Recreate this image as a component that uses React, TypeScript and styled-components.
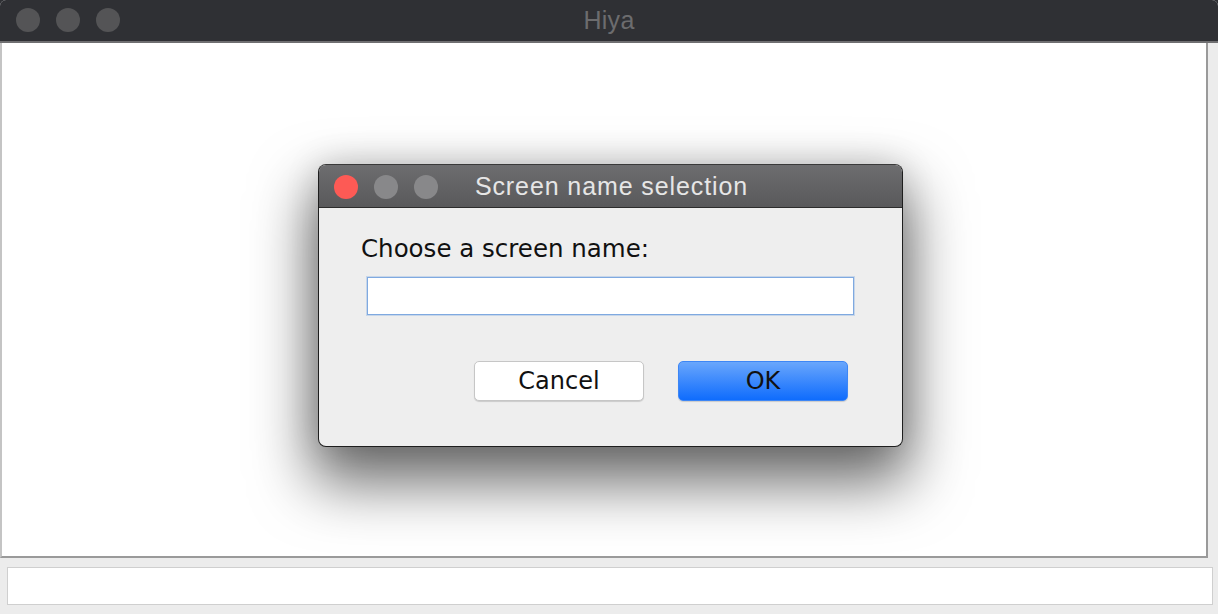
import styled, { createGlobalStyle } from "styled-components";

const GlobalStyle = createGlobalStyle`
    html, body {
        margin: 0;
        padding: 0;
        background: #2f3034;
        overflow: hidden;
    }
    #root {
        width: 1218px;
        height: 614px;
    }
`;

const Window = styled.div`
    position: relative;
    width: 1218px;
    height: 614px;
    display: flex;
    flex-direction: column;
    background: #ececec;
    border-radius: 6px 6px 0 0;
    overflow: hidden;
`;

const TitleBar = styled.div`
    position: relative;
    height: 41px;
    flex-shrink: 0;
    background: #2f3034;
    border-bottom: 2px solid #6f6f71;
    display: flex;
    align-items: center;
    justify-content: center;
`;

const Lights = styled.div`
    position: absolute;
    left: 16px;
    top: 8px;
    display: flex;
    gap: 16px;
`;

const Light = styled.span<{ $color: string }>`
    width: 24px;
    height: 24px;
    border-radius: 50%;
    background: ${(p) => p.$color};
`;

const WindowTitle = styled.div`
    font-family: "Liberation Sans", Arial, sans-serif;
    font-size: 25px;
    letter-spacing: 0.3px;
    color: #6c6c6e;
`;

const Panel = styled.div`
    position: relative;
    height: 515px;
    width: 1208px;
    box-sizing: border-box;
    background: #ffffff;
    border-left: 2px solid #c4c4c4;
    border-right: 2px solid #9a9a9a;
    border-bottom: 2px solid #9a9a9a;
`;

const Footer = styled.div`
    flex: 1;
    padding: 9px 5px 0 7px;
`;

const FooterField = styled.div`
    height: 38px;
    box-sizing: border-box;
    background: #ffffff;
    border: 1px solid #cfcfcf;
`;

const Dialog = styled.div`
    position: absolute;
    left: 316px;
    top: 121px;
    width: 585px;
    height: 283px;
    box-sizing: border-box;
    background: #eeeeee;
    border: 1px solid #1e1e1e;
    border-top-color: #3a3a3a;
    border-radius: 8px;
    overflow: hidden;
    box-shadow: 0 30px 60px 6px rgba(0, 0, 0, 0.58),
        0 0 34px rgba(0, 0, 0, 0.14);
    display: flex;
    flex-direction: column;
`;

const DialogBar = styled.div`
    position: relative;
    height: 42px;
    flex-shrink: 0;
    background: linear-gradient(#6d6d6f, #59595b);
    border-bottom: 1px solid #2c2c2c;
    display: flex;
    align-items: center;
    justify-content: center;
`;

const DialogLights = styled.div`
    position: absolute;
    left: 15px;
    top: 10px;
    display: flex;
    gap: 16px;
`;

const DialogTitle = styled.div`
    font-family: "Liberation Sans", Arial, sans-serif;
    font-size: 25px;
    letter-spacing: 0.9px;
    color: #e6e6e6;
    margin-left: 2px;
`;

const DialogBody = styled.div`
    padding: 27px 48px 0 42px;
    display: flex;
    flex-direction: column;
`;

const Label = styled.div`
    font-family: "DejaVu Sans", "Lucida Grande", sans-serif;
    font-size: 24.5px;
    color: #111111;
    line-height: 28px;
`;

const TextField = styled.div`
    margin: 14px 0 0 6px;
    height: 38px;
    box-sizing: border-box;
    background: #ffffff;
    border: 1px solid #7fa9e0;
    box-shadow: 0 0 0 1px rgba(127, 169, 224, 0.35);
`;

const Buttons = styled.div`
    display: flex;
    justify-content: flex-end;
    gap: 34px;
    margin-top: 46px;
    margin-right: 6px;
`;

const Button = styled.div<{ $primary?: boolean }>`
    width: 170px;
    height: 40px;
    box-sizing: border-box;
    border-radius: 5px;
    display: flex;
    align-items: center;
    justify-content: center;
    font-family: "DejaVu Sans", "Lucida Grande", sans-serif;
    font-size: 24px;
    color: #111111;
    background: ${(p) =>
        p.$primary ? "linear-gradient(#69a6fc, #0f6cfd)" : "#ffffff"};
    border: 1px solid ${(p) => (p.$primary ? "#3d86f5" : "#c6c6c6")};
    box-shadow: 0 1px 1px rgba(0, 0, 0, 0.15);
`;

function App() {
    return (
        <>
            <GlobalStyle />
            <Window>
                <TitleBar>
                    <Lights>
                        <Light $color="#545456" />
                        <Light $color="#545456" />
                        <Light $color="#545456" />
                    </Lights>
                    <WindowTitle>Hiya</WindowTitle>
                </TitleBar>

                <Panel>
                    <Dialog>
                        <DialogBar>
                            <DialogLights>
                                <Light $color="#fd5a55" />
                                <Light $color="#88888a" />
                                <Light $color="#88888a" />
                            </DialogLights>
                            <DialogTitle>Screen name selection</DialogTitle>
                        </DialogBar>
                        <DialogBody>
                            <Label>Choose a screen name:</Label>
                            <TextField />
                            <Buttons>
                                <Button>Cancel</Button>
                                <Button $primary>OK</Button>
                            </Buttons>
                        </DialogBody>
                    </Dialog>
                </Panel>

                <Footer>
                    <FooterField />
                </Footer>
            </Window>
        </>
    );
}
export default App;
